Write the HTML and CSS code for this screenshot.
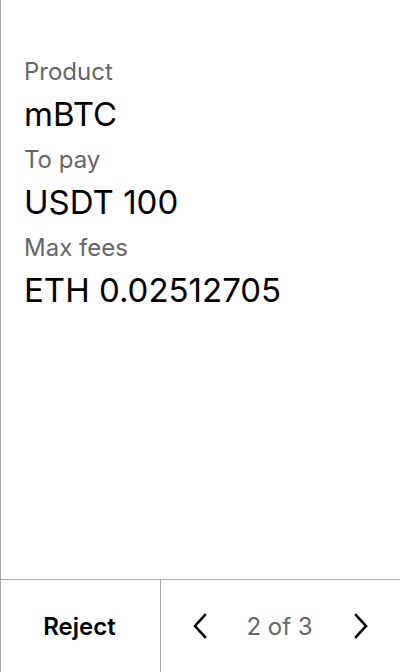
FILE: index.html
```html
<!DOCTYPE html>
<html>
<head>
<meta charset="utf-8">
<link rel="stylesheet" href="styles.css">
</head>
<body>
<div class="screen">
  <main class="content">
    <div class="field">
      <div class="label">Product</div>
      <div class="value">mBTC</div>
    </div>
    <div class="field">
      <div class="label">To pay</div>
      <div class="value">USDT 100</div>
    </div>
    <div class="field">
      <div class="label">Max fees</div>
      <div class="value">ETH 0.02512705</div>
    </div>
  </main>
  <footer class="footer">
    <div class="reject">Reject</div>
    <div class="pager">
      <svg class="chev" width="16" height="26" viewBox="0 0 16 26"><path d="M13 2 L3 13 L13 24" fill="none" stroke="#000" stroke-width="2.6" stroke-linecap="square"/></svg>
      <span class="page">2 of 3</span>
      <svg class="chev" width="16" height="26" viewBox="0 0 16 26"><path d="M3 2 L13 13 L3 24" fill="none" stroke="#000" stroke-width="2.6" stroke-linecap="square"/></svg>
    </div>
  </footer>
</div>
</body>
</html>
```
FILE: styles.css
```css
html, body {
  margin: 0;
  padding: 0;
  background: #fff;
}
body {
  font-family: Inter, "Noto Sans", sans-serif;
  color: #000;
}
.screen {
  width: 400px;
  height: 672px;
  box-sizing: border-box;
  border-left: 1px solid #a8a8a8;
  display: flex;
  flex-direction: column;
}
.content {
  flex: 1;
  padding: 56px 0 0 23px;
  display: flex;
  flex-direction: column;
  gap: 10px;
}
.field {
  display: flex;
  flex-direction: column;
  gap: 6px;
}
.label {
  font-size: 24px;
  line-height: 32px;
  color: #666;
}
.value {
  font-size: 33px;
  line-height: 40px;
  color: #000;
}
.footer {
  height: 92px;
  border-top: 1px solid #a8a8a8;
  display: flex;
}
.reject {
  box-sizing: border-box;
  width: 160px;
  border-right: 1px solid #a8a8a8;
  display: flex;
  align-items: center;
  justify-content: center;
  font-size: 24px;
  font-weight: 600;
  padding-right: 2px;
}
.pager {
  flex: 1;
  display: flex;
  align-items: center;
  justify-content: space-between;
  padding: 0 31px 0 31px;
}
.page {
  font-size: 24px;
  color: #666;
  margin-left: -2px;
}
.chev {
  display: block;
}
```
